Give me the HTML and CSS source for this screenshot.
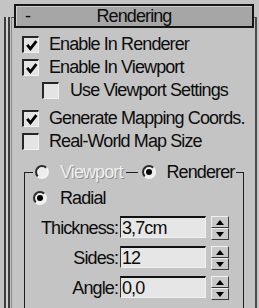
FILE: index.html
```html
<!DOCTYPE html>
<html lang="en">
<head>
    <meta charset="UTF-8">
    <meta name="viewport" content="width=device-width, initial-scale=1.0">
    <title>Rendering</title>
    <link rel="stylesheet" href="styles.css">
</head>
<body>
    <div class="panel">
        <div class="panel-inner">
            <div class="rollout">
                <div class="rollout-head">
                    <span class="toggle">-</span>
                    <span class="title">Rendering</span>
                    <span></span>
                </div>

                <div class="check-row first">
                    <span class="check"><svg viewBox="0 0 12 12"><path d="M2 5.5 L5 9 L10.5 2"/></svg></span>
                    <span>Enable In Renderer</span>
                </div>
                <div class="check-row">
                    <span class="check"><svg viewBox="0 0 12 12"><path d="M2 5.5 L5 9 L10.5 2"/></svg></span>
                    <span>Enable In Viewport</span>
                </div>
                <div class="check-row sub">
                    <span class="check"></span>
                    <span>Use Viewport Settings</span>
                </div>
                <div class="check-row spaced">
                    <span class="check"><svg viewBox="0 0 12 12"><path d="M2 5.5 L5 9 L10.5 2"/></svg></span>
                    <span>Generate Mapping Coords.</span>
                </div>
                <div class="check-row">
                    <span class="check"></span>
                    <span>Real-World Map Size</span>
                </div>

                <fieldset class="group">
                    <legend>
                        <span class="radio"></span>
                        <span class="disabled">Viewport</span>
                        <span class="dash"></span>
                        <span class="radio on"></span>
                        <span>Renderer</span>
                    </legend>

                    <div class="radio-row">
                        <span class="radio on"></span>
                        <span>Radial</span>
                    </div>

                    <div class="spin-row first">
                        <label>Thickness:</label>
                        <span class="field">3,7cm</span>
                        <span class="spinner"><span class="up"></span><span class="down"></span></span>
                    </div>
                    <div class="spin-row">
                        <label>Sides:</label>
                        <span class="field">12</span>
                        <span class="spinner"><span class="up"></span><span class="down"></span></span>
                    </div>
                    <div class="spin-row">
                        <label>Angle:</label>
                        <span class="field">0,0</span>
                        <span class="spinner"><span class="up"></span><span class="down"></span></span>
                    </div>
                </fieldset>
            </div>
        </div>
    </div>
</body>
</html>
```

FILE: styles.css
```css
body {
    margin: 0;
    height: 308px;
    overflow: hidden;
    background-color: #c4c4c4;
    font-family: "Liberation Sans", Arial, sans-serif;
    font-size: 18px;
    letter-spacing: -0.9px;
    color: #0c0c0c;
}
.panel {
    box-sizing: border-box;
    margin-left: 4px;
    height: 100%;
    border-left: 2px solid #3d3d3d;
    padding-left: 2px;
    background-color: #cfcfcf;
}
.panel-inner {
    box-sizing: border-box;
    height: 100%;
    border-left: 2px solid #3d3d3d;
    padding-left: 1px;
    background-color: #c4c4c4;
}
.rollout {
    box-sizing: border-box;
    margin-top: 17px;
    margin-right: 2px;
    height: 291px;
    border-top: 1px solid #4a4a4a;
    border-left: 1px solid #8a8a8a;
    border-right: 2px solid #4a4a4a;
}
.rollout-head {
    display: grid;
    grid-template-columns: 1fr auto 1fr;
    align-items: center;
    height: 20px;
    margin: -14px 1px 0 2px;
    border: 2px solid #161616;
    background-color: #a6a6a6;
    box-shadow: inset 1px 1px 0 #cfcfcf;
}
.toggle {
    padding-left: 9px;
}
.title {
    text-align: center;
}
.check-row {
    display: flex;
    align-items: center;
    gap: 10px;
    height: 23px;
    padding-left: 10px;
}
.check-row.first {
    margin-top: 5px;
}
.check-row.sub {
    padding-left: 30px;
    gap: 11px;
}
.check-row.spaced {
    margin-top: 5px;
}
.check {
    display: flex;
    align-items: center;
    justify-content: center;
    box-sizing: border-box;
    width: 17px;
    height: 17px;
    border-top: 2px solid #262626;
    border-left: 2px solid #262626;
    border-right: 1px solid #f2f2f2;
    border-bottom: 1px solid #f2f2f2;
    background-color: #e4e4e4;
}
.check svg {
    width: 13px;
    height: 13px;
}
.check path {
    fill: none;
    stroke: #000;
    stroke-width: 2.6;
}
.group {
    box-sizing: border-box;
    width: 220px;
    height: 147px;
    margin: 8px 0 0 12px;
    padding: 4px 0 0 8px;
    border: 1px solid #1e1e1e;
    border-bottom: none;
}
.group legend {
    display: flex;
    align-items: center;
    height: 22px;
    padding: 0 2px 0 2px;
}
.group legend .radio {
    margin-right: 11px;
}
.disabled {
    color: #efefef;
    text-shadow: 1px 1px 0 #8f8f8f;
}
.dash {
    width: 12px;
    height: 1px;
    margin: 0 4px 0 3px;
    background-color: #1e1e1e;
}
.radio {
    display: inline-flex;
    align-items: center;
    justify-content: center;
    box-sizing: border-box;
    width: 14px;
    height: 14px;
    border-radius: 50%;
    border: 2px solid #f2f2f2;
    border-top-color: #2a2a2a;
    border-left-color: #2a2a2a;
    background-color: #ececec;
}
.radio.on::after {
    content: "";
    width: 6px;
    height: 6px;
    border-radius: 50%;
    background-color: #000;
}
.radio-row {
    display: flex;
    align-items: center;
    gap: 13px;
    height: 22px;
}
.spin-row {
    display: flex;
    align-items: flex-start;
    height: 24px;
    margin-top: 6px;
}
.spin-row.first {
    margin-top: 7px;
}
.spin-row label {
    width: 85px;
    line-height: 25px;
    text-align: right;
}
.field {
    box-sizing: border-box;
    width: 86px;
    height: 22px;
    margin-left: 2px;
    padding-left: 1px;
    line-height: 20px;
    border-top: 2px solid #111;
    border-left: 1px solid #333;
    border-right: 1px solid #f0f0f0;
    border-bottom: 1px solid #f0f0f0;
    background-color: #e6e6e6;
}
.spinner {
    display: flex;
    flex-direction: column;
    width: 18px;
    height: 24px;
    margin-left: 5px;
}
.spinner span {
    flex: 1;
    display: flex;
    align-items: center;
    justify-content: center;
    border-top: 1px solid #f0f0f0;
    border-left: 1px solid #f0f0f0;
    border-right: 1px solid #3a3a3a;
    border-bottom: 1px solid #3a3a3a;
    background-color: #c8c8c8;
}
.spinner .up::after {
    content: "";
    border-left: 4px solid transparent;
    border-right: 4px solid transparent;
    border-bottom: 5px solid #000;
}
.spinner .down::after {
    content: "";
    border-left: 4px solid transparent;
    border-right: 4px solid transparent;
    border-top: 5px solid #000;
}
```
